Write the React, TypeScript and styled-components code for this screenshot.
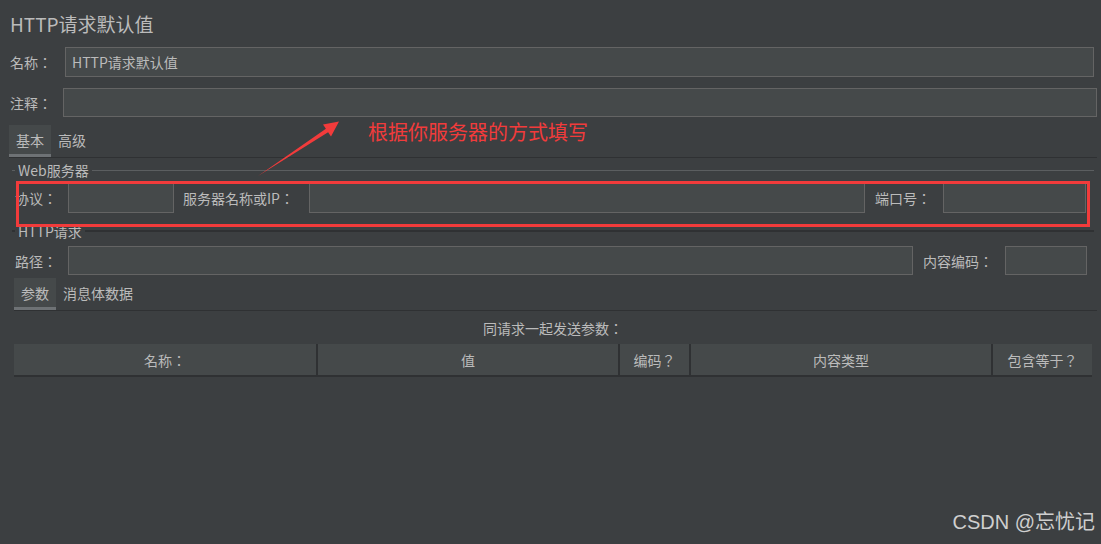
import React from "react";
import styled, { createGlobalStyle } from "styled-components";

const GlobalStyle = createGlobalStyle`
  html, body {
    margin: 0;
    padding: 0;
    background: #3c3f41;
  }
  body {
    font-family: "Noto Sans CJK JP", "Noto Sans CJK SC", "Noto Sans", sans-serif;
    color: #bbbbbb;
  }
  * { box-sizing: border-box; }
`;

const Page = styled.div`
  position: relative;
  width: 1101px;
  height: 544px;
  overflow: hidden;
  background: #3c3f41;
  display: flex;
  flex-direction: column;
`;

const Title = styled.div`
  margin-top: 8px;
  height: 32px;
  line-height: 32px;
  padding-left: 10px;
  font-family: "Noto Sans CJK SC", sans-serif;
  font-size: 19px;
  color: #bbbbbb;
`;

const Row = styled.div<{ $mt: number; $pl: number; $h: number }>`
  display: flex;
  align-items: center;
  margin-top: ${(p) => p.$mt}px;
  padding-left: ${(p) => p.$pl}px;
  height: ${(p) => p.$h}px;
`;

const Label = styled.span<{ $w: number; $ml?: number }>`
  flex: none;
  width: ${(p) => p.$w}px;
  margin-left: ${(p) => p.$ml ?? 0}px;
  font-size: 14px;
  line-height: 20px;
  color: #bbbbbb;
  white-space: nowrap;
`;

const Field = styled.input<{ $w: number }>`
  flex: none;
  width: ${(p) => p.$w}px;
  height: 100%;
  margin: 0;
  padding: 0 0 0 6px;
  background: #45494a;
  border: 1px solid #646464;
  border-radius: 0;
  outline: none;
  font-family: "Noto Sans CJK SC", "Noto Sans", sans-serif;
  font-size: 14px;
  color: #bbbbbb;
`;

const TabBar = styled.div<{ $ml: number; $mt: number }>`
  display: flex;
  margin-top: ${(p) => p.$mt}px;
  margin-left: ${(p) => p.$ml}px;
  margin-right: 4px;
  height: 33px;
  border-bottom: 1px solid #2f3133;
`;

const Tab = styled.div<{ $active?: boolean }>`
  height: 32px;
  padding: 0 7px;
  display: flex;
  align-items: center;
  font-size: 14px;
  color: #bbbbbb;
  background: ${(p) => (p.$active ? "#45494a" : "transparent")};
  border-bottom: 3px solid ${(p) => (p.$active ? "#6e7275" : "transparent")};
`;

const Legend = styled.div<{ $mt: number; $line: string; $lw: number }>`
  display: flex;
  align-items: center;
  margin-top: ${(p) => p.$mt}px;
  height: 20px;
  padding-left: 12px;
  padding-right: 7px;
  font-size: 14px;
  color: #bbbbbb;
  &::before {
    content: "";
    width: 3px;
    height: ${(p) => p.$lw}px;
    background: ${(p) => p.$line};
    margin-right: 3px;
  }
  &::after {
    content: "";
    flex: 1;
    height: ${(p) => p.$lw}px;
    background: ${(p) => p.$line};
    margin-left: 3px;
  }
`;

const Caption = styled.div`
  height: 33px;
  display: flex;
  align-items: center;
  justify-content: center;
  padding-left: 14px;
  padding-right: 9px;
  font-size: 14px;
  color: #bbbbbb;
`;

const TableHead = styled.div`
  margin-left: 14px;
  width: 1078px;
  height: 33px;
  display: grid;
  grid-template-columns: 302px 300px 69px 300px 1fr;
  column-gap: 2px;
  background: #2f3133;
  border-bottom: 2px solid #2f3133;
`;

const HeadCell = styled.div`
  background: #45494a;
  display: flex;
  align-items: center;
  justify-content: center;
  font-size: 14px;
  color: #bbbbbb;
`;

const RedBox = styled.div`
  position: absolute;
  left: 16px;
  top: 181px;
  width: 1074px;
  height: 46px;
  border: 3px solid #f23b3b;
`;

const Arrow = styled.svg`
  position: absolute;
  left: 250px;
  top: 110px;
`;

const Note = styled.div`
  position: absolute;
  left: 368px;
  top: 119px;
  font-family: "Noto Sans CJK SC", sans-serif;
  font-size: 20px;
  line-height: 26px;
  color: #f23b3b;
  white-space: nowrap;
`;

const Watermark = styled.div`
  position: absolute;
  right: 6px;
  top: 509px;
  font-family: "Liberation Sans", "Noto Sans CJK SC", sans-serif;
  font-size: 20px;
  line-height: 26px;
  color: #cfcfcf;
  white-space: nowrap;
`;

export default function App() {
  return (
    <>
      <GlobalStyle />
      <Page>
        <Title>HTTP请求默认值</Title>

        <Row $mt={7} $pl={10} $h={30}>
          <Label $w={55}>名称：</Label>
          <Field $w={1029} readOnly defaultValue="HTTP请求默认值" />
        </Row>

        <Row $mt={11} $pl={10} $h={29}>
          <Label $w={53}>注释：</Label>
          <Field $w={1034} readOnly defaultValue="" />
        </Row>

        <TabBar $ml={9} $mt={8}>
          <Tab $active>基本</Tab>
          <Tab>高级</Tab>
        </TabBar>

        <Legend $mt={2} $line="#5b5e60" $lw={1}>Web服务器</Legend>

        <Row $mt={3} $pl={15} $h={30}>
          <Label $w={53}>协议：</Label>
          <Field $w={106} readOnly defaultValue="" />
          <Label $w={126} $ml={9}>服务器名称或IP：</Label>
          <Field $w={556} readOnly defaultValue="" />
          <Label $w={68} $ml={10}>端口号：</Label>
          <Field $w={143} readOnly defaultValue="" />
        </Row>

        <Legend $mt={8} $line="#2f3133" $lw={2}>HTTP请求</Legend>

        <Row $mt={5} $pl={15} $h={29}>
          <Label $w={53}>路径：</Label>
          <Field $w={845} readOnly defaultValue="" />
          <Label $w={82} $ml={10}>内容编码：</Label>
          <Field $w={82} readOnly defaultValue="" />
        </Row>

        <TabBar $ml={14} $mt={3}>
          <Tab $active>参数</Tab>
          <Tab>消息体数据</Tab>
        </TabBar>

        <Caption>同请求一起发送参数：</Caption>

        <TableHead>
          <HeadCell>名称：</HeadCell>
          <HeadCell>值</HeadCell>
          <HeadCell>编码？</HeadCell>
          <HeadCell>内容类型</HeadCell>
          <HeadCell>包含等于？</HeadCell>
        </TableHead>

        <RedBox />
        <Arrow width="100" height="75" viewBox="250 110 100 75">
          <polygon
            points="258,176 325.9,128.8 323,124.5 339,121.5 331,136.5 328.1,132.2"
            fill="#f23b3b"
          />
        </Arrow>
        <Note>根据你服务器的方式填写</Note>
        <Watermark>CSDN @忘忧记</Watermark>
      </Page>
    </>
  );
}
